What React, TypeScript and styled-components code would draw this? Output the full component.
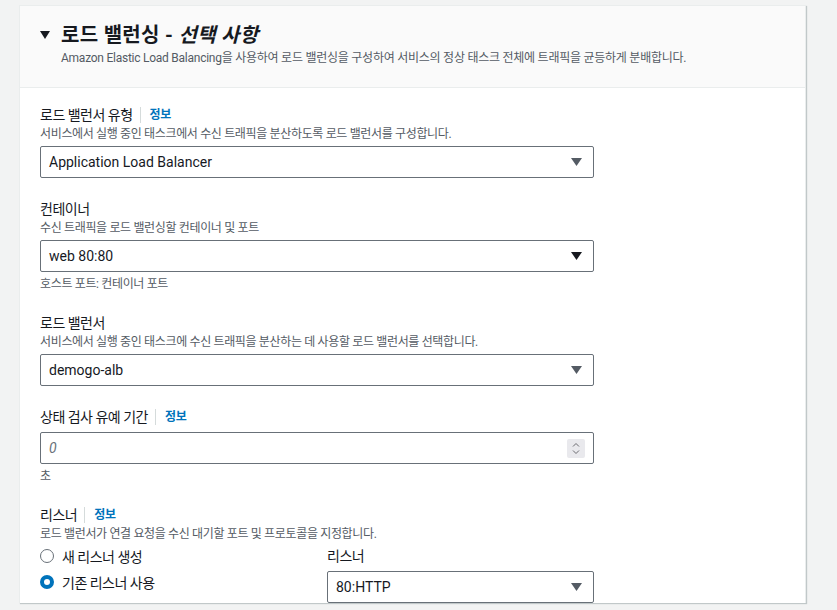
import React from "react";
import styled, { createGlobalStyle } from "styled-components";

const GlobalStyle = createGlobalStyle`
  html, body {
    margin: 0;
    padding: 0;
    background: #f2f3f3;
  }
  body {
    font-family: "Helvetica Neue", Roboto, "Liberation Sans", "Noto Sans CJK KR", sans-serif;
    color: #16191f;
    -webkit-font-smoothing: antialiased;
  }
`;

const Page = styled.div`
  padding: 5px 31px 0 19px;
  height: 610px;
  overflow: hidden;
  box-sizing: border-box;
`;

const Card = styled.section`
  background: #ffffff;
  border: 1px solid #eaeded;
  border-bottom: none;
  box-shadow: 1px 1px 1px 0 rgba(0, 28, 36, 0.2);
`;

const Header = styled.header`
  background: #fafafa;
  border-bottom: 1px solid #eaeded;
  padding: 18px 20px 21px 20px;
`;

const TitleRow = styled.div`
  display: flex;
  align-items: center;
  gap: 11px;
  height: 22px;
`;

const Caret = styled.svg`
  width: 10px;
  height: 8px;
  flex: none;
`;

const Title = styled.h2`
  margin: 0;
  font-size: 20px;
  line-height: 22px;
  font-weight: 700;
  color: #16191f;
  letter-spacing: 0.3px;
`;

const Optional = styled.i`
  font-style: italic;
`;

const HeaderDesc = styled.p`
  margin: 4px 0 0 21px;
  font-size: 12px;
  line-height: 16px;
  color: #545b64;
  letter-spacing: -0.25px;
`;

const Body = styled.div`
  padding: 16px 20px 0 20px;
  display: flex;
  flex-direction: column;
  gap: 20px;
`;

const Field = styled.div`
  display: flex;
  flex-direction: column;
`;

const LabelRow = styled.div`
  display: flex;
  align-items: center;
  height: 22px;
`;

const Label = styled.span`
  font-size: 14px;
  line-height: 22px;
  color: #16191f;
  letter-spacing: -0.5px;
`;

const Info = styled.a`
  font-size: 12px;
  font-weight: 700;
  color: #0073bb;
  text-decoration: none;
  border-left: 1px solid #d5dbdb;
  margin-left: 7px;
  padding-left: 9px;
  line-height: 16px;
  letter-spacing: -0.3px;
`;

const Desc = styled.div`
  font-size: 12px;
  line-height: 16px;
  color: #545b64;
  letter-spacing: -0.35px;
`;

const Constraint = styled(Desc)`
  margin-top: 4px;
`;

const Control = styled.div<{ $width?: number }>`
  margin-top: 4px;
  width: ${(p) => p.$width ?? 554}px;
  height: 32px;
  box-sizing: border-box;
  border: 1px solid #687078;
  border-radius: 2px;
  background: #fff;
  display: flex;
  align-items: center;
  padding: 0 11px 0 8px;
`;

const Value = styled.span<{ $placeholder?: boolean }>`
  flex: 1;
  font-size: 14px;
  color: ${(p) => (p.$placeholder ? "#687078" : "#16191f")};
  font-style: ${(p) => (p.$placeholder ? "italic" : "normal")};
`;

const Spinner = styled.div`
  width: 18px;
  height: 19px;
  background: #e9e9ed;
  border-radius: 2px;
  display: flex;
  align-items: center;
  justify-content: center;
  margin-right: -3px;
`;

const ListenerGrid = styled.div`
  display: grid;
  grid-template-columns: 287px 267px;
  margin-top: 3px;
`;

const RadioGroup = styled.div`
  display: flex;
  flex-direction: column;
  gap: 6px;
  padding-top: 1px;
`;

const RadioItem = styled.label`
  display: flex;
  align-items: center;
  gap: 8px;
  height: 20px;
  font-size: 14px;
  color: #16191f;
  letter-spacing: -0.5px;
`;

const RadioDot = styled.span<{ $checked?: boolean }>`
  width: 14px;
  height: 14px;
  box-sizing: border-box;
  border-radius: 50%;
  border: ${(p) => (p.$checked ? "4px solid #0073bb" : "1px solid #687078")};
  background: #fff;
  flex: none;
`;

const SubField = styled.div`
  display: flex;
  flex-direction: column;
`;

const Arrow = ({ color = "#545b64" }: { color?: string }) => (
  <svg width="11" height="8" viewBox="0 0 11 8">
    <path d="M0 0 H11 L5.5 8 Z" fill={color} />
  </svg>
);

const Select = ({
  value,
  arrow,
  width,
}: {
  value: string;
  arrow?: string;
  width?: number;
}) => (
  <Control $width={width}>
    <Value>{value}</Value>
    <Arrow color={arrow} />
  </Control>
);

export default function App() {
  return (
    <>
      <GlobalStyle />
      <Page>
        <Card>
          <Header>
            <TitleRow>
              <Caret viewBox="0 0 10 8">
                <path d="M0 0 H10 L5 8 Z" fill="#16191f" />
              </Caret>
              <Title>
                로드 밸런싱 - <Optional>선택 사항</Optional>
              </Title>
            </TitleRow>
            <HeaderDesc>
              Amazon Elastic Load Balancing을 사용하여 로드 밸런싱을 구성하여 서비스의 정상 태스크 전체에
              트래픽을 균등하게 분배합니다.
            </HeaderDesc>
          </Header>
          <Body>
            <Field>
              <LabelRow>
                <Label>로드 밸런서 유형</Label>
                <Info href="#">정보</Info>
              </LabelRow>
              <Desc>서비스에서 실행 중인 태스크에서 수신 트래픽을 분산하도록 로드 밸런서를 구성합니다.</Desc>
              <Select value="Application Load Balancer" />
            </Field>

            <Field>
              <LabelRow>
                <Label>컨테이너</Label>
              </LabelRow>
              <Desc>수신 트래픽을 로드 밸런싱할 컨테이너 및 포트</Desc>
              <Select value="web 80:80" arrow="#16191f" />
              <Constraint>호스트 포트: 컨테이너 포트</Constraint>
            </Field>

            <Field>
              <LabelRow>
                <Label>로드 밸런서</Label>
              </LabelRow>
              <Desc>서비스에서 실행 중인 태스크에 수신 트래픽을 분산하는 데 사용할 로드 밸런서를 선택합니다.</Desc>
              <Select value="demogo-alb" />
            </Field>

            <Field>
              <LabelRow>
                <Label>상태 검사 유예 기간</Label>
                <Info href="#">정보</Info>
              </LabelRow>
              <Control>
                <Value $placeholder>0</Value>
                <Spinner>
                  <svg width="8" height="13" viewBox="0 0 8 13">
                    <path d="M1 4.5 L4 1.5 L7 4.5 M1 8.5 L4 11.5 L7 8.5" stroke="#6b6b70" strokeWidth="1" fill="none" />
                  </svg>
                </Spinner>
              </Control>
              <Constraint>초</Constraint>
            </Field>

            <Field>
              <LabelRow>
                <Label>리스너</Label>
                <Info href="#">정보</Info>
              </LabelRow>
              <Desc>로드 밸런서가 연결 요청을 수신 대기할 포트 및 프로토콜을 지정합니다.</Desc>
              <ListenerGrid>
                <RadioGroup>
                  <RadioItem>
                    <RadioDot />새 리스너 생성
                  </RadioItem>
                  <RadioItem>
                    <RadioDot $checked />기존 리스너 사용
                  </RadioItem>
                </RadioGroup>
                <SubField>
                  <Label>리스너</Label>
                  <Select value="80:HTTP" width={267} />
                </SubField>
              </ListenerGrid>
            </Field>
          </Body>
        </Card>
      </Page>
    </>
  );
}
